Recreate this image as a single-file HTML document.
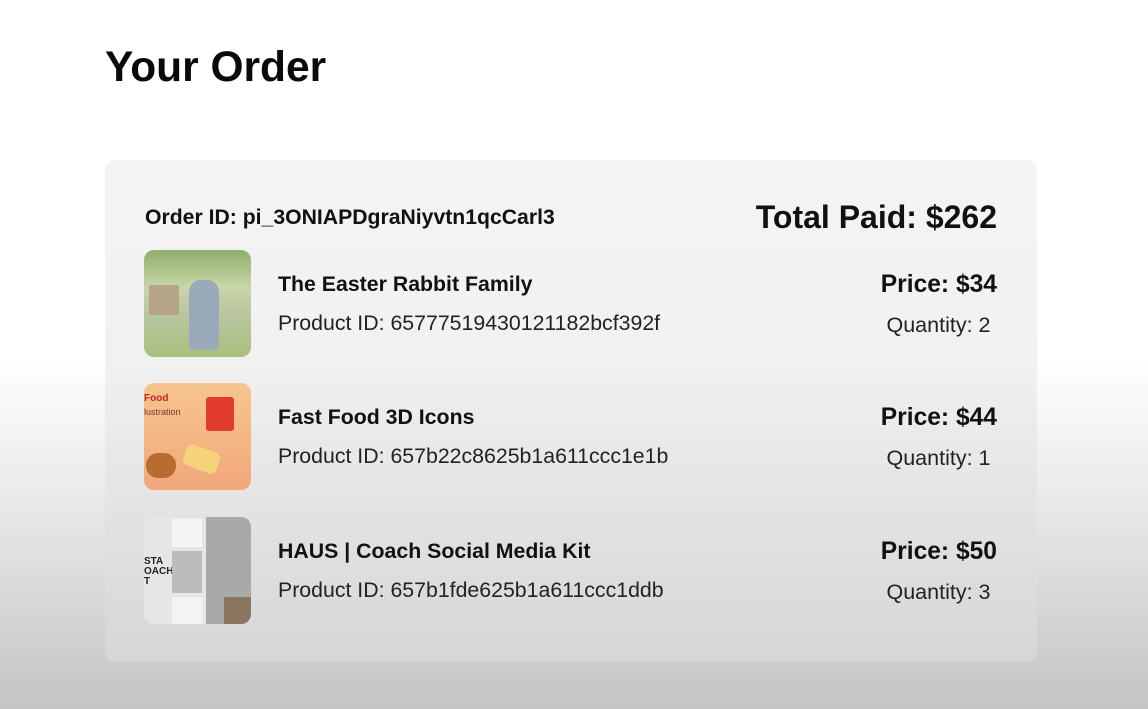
<!DOCTYPE html>
<html><head><style>
*{margin:0;padding:0;box-sizing:border-box}
body{width:1148px;height:709px;overflow:hidden;font-family:"Liberation Sans",Arial,sans-serif;color:#111;
background:linear-gradient(180deg,#fff 0,#fff 360px,#e6e6e6 520px,#c4c4c4 709px);position:relative}
h1{position:absolute;left:105px;top:44px;font-size:42.5px;font-weight:bold;color:#0a0a0a}
.card{position:absolute;left:105px;top:160px;width:932px;height:502px;border-radius:10px;
background:linear-gradient(180deg,#f4f4f4 0,#f1f1f1 200px,#e4e4e4 340px,#d6d6d6 502px)}
.oid{position:absolute;left:40px;top:46px;font-size:21.2px;font-weight:bold}
.tot{position:absolute;right:40px;top:39px;font-size:32px;font-weight:bold}
.img{position:absolute;left:39px;width:107px;height:107px;border-radius:10px;overflow:hidden}
.name{position:absolute;left:173px;font-size:21.3px;font-weight:bold}
.pid{position:absolute;left:173px;font-size:21.3px;color:#222}
.price{position:absolute;right:40px;width:160px;text-align:right;font-size:24.6px;font-weight:bold}
.qty{position:absolute;right:40px;width:117px;text-align:center;font-size:21.5px;color:#222}
</style></head><body>
<h1>Your Order</h1>
<div class="card">
<div class="oid">Order ID: pi_3ONIAPDgraNiyvtn1qcCarl3</div>
<div class="tot">Total Paid: $262</div>

<div class="img" style="top:90px;background:linear-gradient(180deg,#8fae6a 0,#c9d6a8 35%,#b9c6a0 60%,#a9bf7c 100%)">
<div style="position:absolute;left:45px;top:30px;width:30px;height:70px;border-radius:12px 12px 4px 4px;background:#9aaabb"></div>
<div style="position:absolute;left:5px;top:35px;width:30px;height:30px;background:#b7a58a"></div>
</div>
<div class="name" style="top:112px">The Easter Rabbit Family</div>
<div class="pid" style="top:151px">Product ID: 65777519430121182bcf392f</div>
<div class="price" style="top:111px">Price: $34</div>
<div class="qty" style="top:153px">Quantity: 2</div>

<div class="img" style="top:223px;background:linear-gradient(180deg,#f6c58e,#f2a77c)">
<div style="position:absolute;left:0;top:10px;font-size:10px;font-weight:bold;color:#c22">Food</div>
<div style="position:absolute;left:0;top:24px;font-size:9px;color:#733">lustration</div>
<div style="position:absolute;left:62px;top:14px;width:28px;height:34px;background:#e03b2e;border-radius:3px"></div>
<div style="position:absolute;left:2px;top:70px;width:30px;height:25px;background:#b86c2f;border-radius:12px"></div>
<div style="position:absolute;left:40px;top:65px;width:35px;height:22px;background:#f4d37a;border-radius:6px;transform:rotate(20deg)"></div>
</div>
<div class="name" style="top:245px">Fast Food 3D Icons</div>
<div class="pid" style="top:284px">Product ID: 657b22c8625b1a611ccc1e1b</div>
<div class="price" style="top:244px">Price: $44</div>
<div class="qty" style="top:286px">Quantity: 1</div>

<div class="img" style="top:357px;background:#e6e6e4">
<div style="position:absolute;left:0;top:40px;font-size:10px;font-weight:bold;line-height:10px;color:#222">STA<br>OACH<br>T</div>
<div style="position:absolute;left:28px;top:2px;width:30px;height:28px;background:#f5f5f5"></div>
<div style="position:absolute;left:28px;top:34px;width:30px;height:42px;background:#bcbcbc"></div>
<div style="position:absolute;left:28px;top:80px;width:30px;height:27px;background:#f3f3f3"></div>
<div style="position:absolute;left:62px;top:0;width:45px;height:107px;background:#a9a9a7"></div>
<div style="position:absolute;left:80px;top:80px;width:27px;height:27px;background:#8a7660"></div>
</div>
<div class="name" style="top:379px">HAUS | Coach Social Media Kit</div>
<div class="pid" style="top:418px">Product ID: 657b1fde625b1a611ccc1ddb</div>
<div class="price" style="top:378px">Price: $50</div>
<div class="qty" style="top:420px">Quantity: 3</div>
</div>
</body></html>
